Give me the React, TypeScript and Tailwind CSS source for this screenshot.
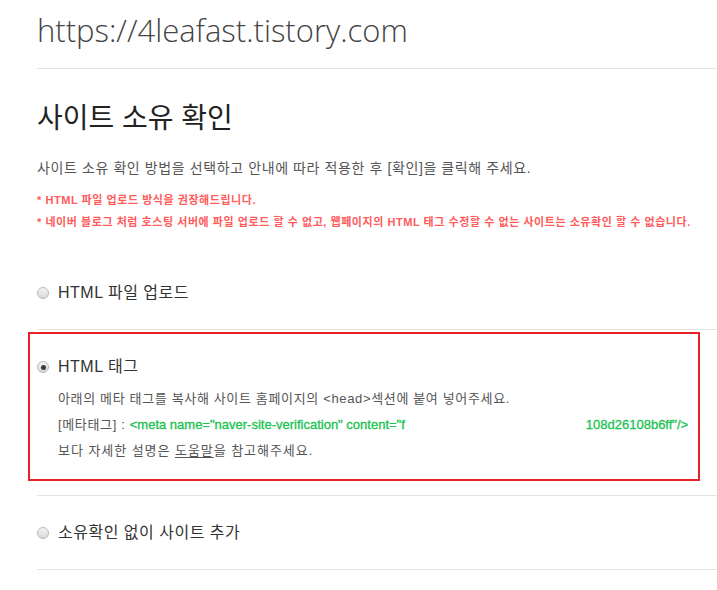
import React from "react";

function Radio({ checked }: { checked?: boolean }) {
  return (
    <span className="relative inline-flex h-[12px] w-[12px] shrink-0 items-center justify-center rounded-full border border-[#b9b9b9] bg-gradient-to-b from-[#f4f4f4] to-[#d9d9d9]">
      {checked && <span className="h-[5px] w-[5px] rounded-full bg-[#3a3a3a]" />}
    </span>
  );
}

export default function App() {
  const body = { fontFamily: '"Liberation Sans", "Noto Sans CJK KR", sans-serif' };
  return (
    <div className="relative min-h-[590px] w-full overflow-hidden bg-white pl-[37px]" style={body}>
      <div className="h-[69px] border-b border-[#e5e5e5] pt-[11px]">
        <h1
          className="text-[31px] leading-[38px] font-light text-[#444]"
          style={{ fontFamily: '"Open Sans", "Noto Sans", sans-serif' }}
        >
          https://4leafast.tistory.com
        </h1>
      </div>

      <h2 className="mt-[32px] text-[28px] leading-[36px] text-[#222]">사이트 소유 확인</h2>
      <p className="mt-[21px] text-[14px] leading-[20px] tracking-[0.6px] text-[#555]">
        사이트 소유 확인 방법을 선택하고 안내에 따라 적용한 후 [확인]을 클릭해 주세요.
      </p>
      <p className="mt-[12px] text-[11px] leading-[20px] font-bold tracking-[0.55px] text-[#ff5b5b]">
        * HTML 파일 업로드 방식을 권장해드립니다.
      </p>
      <p className="mt-[2px] whitespace-nowrap text-[11px] leading-[20px] font-bold tracking-[0.55px] text-[#ff5b5b]">
        * 네이버 블로그 처럼 호스팅 서버에 파일 업로드 할 수 없고, 웹페이지의 HTML 태그 수정할 수 없는 사이트는 소유확인 할 수 없습니다.
      </p>

      <div className="mt-[49px] border-b border-[#e5e5e5] pb-[24px]">
        <div className="flex h-[24px] items-center gap-[9px] text-[16px] tracking-[0.5px] text-[#333]">
          <Radio />
          <span>HTML 파일 업로드</span>
        </div>
      </div>

      <div className="border-b border-[#e5e5e5] pt-[25px] pb-[31px]">
        <div className="flex h-[24px] items-center gap-[9px] text-[16px] tracking-[0.5px] text-[#333]">
          <Radio checked />
          <span>HTML 태그</span>
        </div>
        <div className="mt-[7px] pl-[21px] text-[13px] leading-[26px] text-[#555]">
          <p className="tracking-[0.65px]">
            아래의 메타 태그를 복사해 사이트 홈페이지의 &lt;head&gt;섹션에 붙여 넣어주세요.
          </p>
          <p className="whitespace-nowrap">
            <span className="tracking-[0.65px]">[메타태그] : </span>
            <span className="text-[#17c24f] [-webkit-text-stroke:0.3px_#17c24f]">
              &lt;meta name="naver-site-verification" content="f
            </span>
            <span className="ml-[181px] text-[#17c24f] [-webkit-text-stroke:0.3px_#17c24f]">
              108d26108b6ff"/&gt;
            </span>
          </p>
          <p className="tracking-[0.95px]">
            보다 자세한 설명은 <span className="underline underline-offset-2">도움말</span>을 참고해주세요.
          </p>
        </div>
      </div>

      <div className="border-b border-[#e5e5e5] pt-[25px] pb-[24px]">
        <div className="flex h-[24px] items-center gap-[9px] text-[16px] tracking-[0.5px] text-[#333]">
          <Radio />
          <span>소유확인 없이 사이트 추가</span>
        </div>
      </div>

      <div className="pointer-events-none absolute left-[28px] top-[332px] h-[149px] w-[672px] border-2 border-[#e8212b]" />
    </div>
  );
}
